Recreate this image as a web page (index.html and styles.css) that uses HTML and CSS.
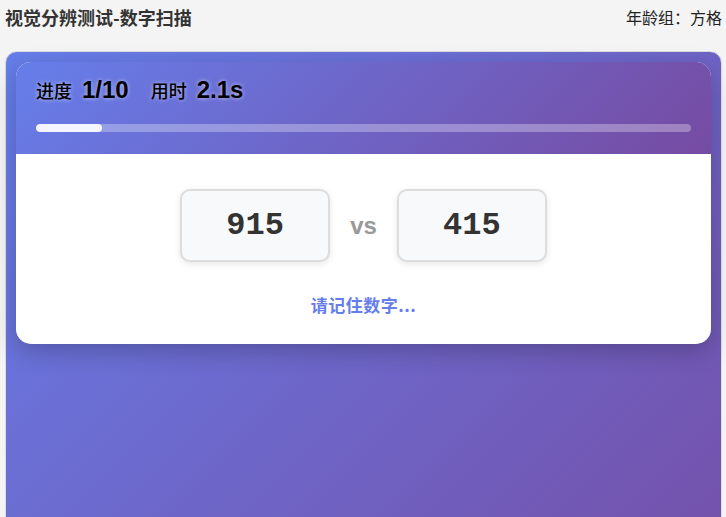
FILE: index.html
```html
<!DOCTYPE html>
<html lang="zh-CN">
<head>
    <meta charset="UTF-8">
    <meta name="viewport" content="width=device-width, initial-scale=1.0">
    <title>视觉分辨测试-数字扫描</title>
    <link rel="stylesheet" href="styles.css">
</head>
<body>
    <div class="topbar">
        <div class="page-title">视觉分辨测试-数字扫描</div>
        <div class="age-group">年龄组：方格</div>
    </div>

    <div class="test-wrap">
        <div class="test-card">
            <div class="card-head">
                <div class="stats">
                    <span class="stat-label">进度</span>
                    <span class="stat-value">1/10</span>
                    <span class="stat-label gap">用时</span>
                    <span class="stat-value">2.1s</span>
                </div>
                <div class="progress">
                    <div class="progress-fill" style="width: 10%"></div>
                </div>
            </div>
            <div class="card-body">
                <div class="compare">
                    <div class="num-box">915</div>
                    <div class="vs">vs</div>
                    <div class="num-box">415</div>
                </div>
                <div class="hint">请记住数字...</div>
            </div>
        </div>
    </div>
</body>
</html>
```

FILE: styles.css
```css
body, html {
    margin: 0;
    padding: 0;
    background-color: #f4f4f4;
    font-family: "Noto Sans CJK SC", "Liberation Sans", sans-serif;
    color: #333;
    overflow: hidden;
}

body {
    padding: 0 4px 0 5px;
}

.topbar {
    display: flex;
    justify-content: space-between;
    align-items: center;
    height: 34px;
    margin-bottom: 17px;
}

.page-title {
    font-size: 18px;
    font-weight: bold;
    color: #333;
}

.age-group {
    font-size: 16px;
    color: #222;
}

.test-wrap {
    min-height: 640px;
    padding: 10px;
    border: 1px solid #dcdcdc;
    border-radius: 12px 12px 0 0;
    background: linear-gradient(135deg, #667eea 0%, #764ba2 100%);
}

.test-card {
    border-radius: 15px;
    overflow: hidden;
    background-color: #fff;
    box-shadow: 0 8px 24px rgba(0, 0, 0, 0.22);
}

.card-head {
    padding: 14px 20px 22px;
    background: linear-gradient(135deg, #667eea 0%, #764ba2 100%);
}

.stats {
    display: flex;
    align-items: center;
    height: 28px;
    color: #000;
    text-shadow: 0 0 4px rgba(255, 255, 255, 0.6);
}

.stat-label {
    font-size: 18px;
    font-weight: 500;
    margin-right: 10px;
}

.stat-label.gap {
    margin-left: 22px;
}

.stat-value {
    font-family: "Liberation Sans", sans-serif;
    font-size: 24px;
    font-weight: bold;
}

.progress {
    margin-top: 20px;
    height: 8px;
    border-radius: 4px;
    background-color: rgba(255, 255, 255, 0.3);
    overflow: hidden;
}

.progress-fill {
    height: 100%;
    border-radius: 4px;
    background-color: #f5f5ff;
}

.card-body {
    padding: 35px 20px 27px;
    text-align: center;
}

.compare {
    display: flex;
    justify-content: center;
    align-items: center;
}

.num-box {
    box-sizing: border-box;
    width: 150px;
    height: 73px;
    display: flex;
    justify-content: center;
    align-items: center;
    background-color: #f8f9fa;
    border: 2px solid #ddd;
    border-radius: 10px;
    box-shadow: 0 2px 6px rgba(0, 0, 0, 0.1);
    font-family: "Liberation Mono", monospace;
    font-size: 32px;
    font-weight: bold;
    color: #333;
}

.vs {
    margin: 0 20px;
    font-family: "Liberation Sans", sans-serif;
    font-size: 24px;
    font-weight: bold;
    color: #999;
}

.hint {
    margin-top: 31px;
    line-height: 24px;
    font-size: 17px;
    font-weight: bold;
    letter-spacing: 0.5px;
    color: #667eea;
}
```
